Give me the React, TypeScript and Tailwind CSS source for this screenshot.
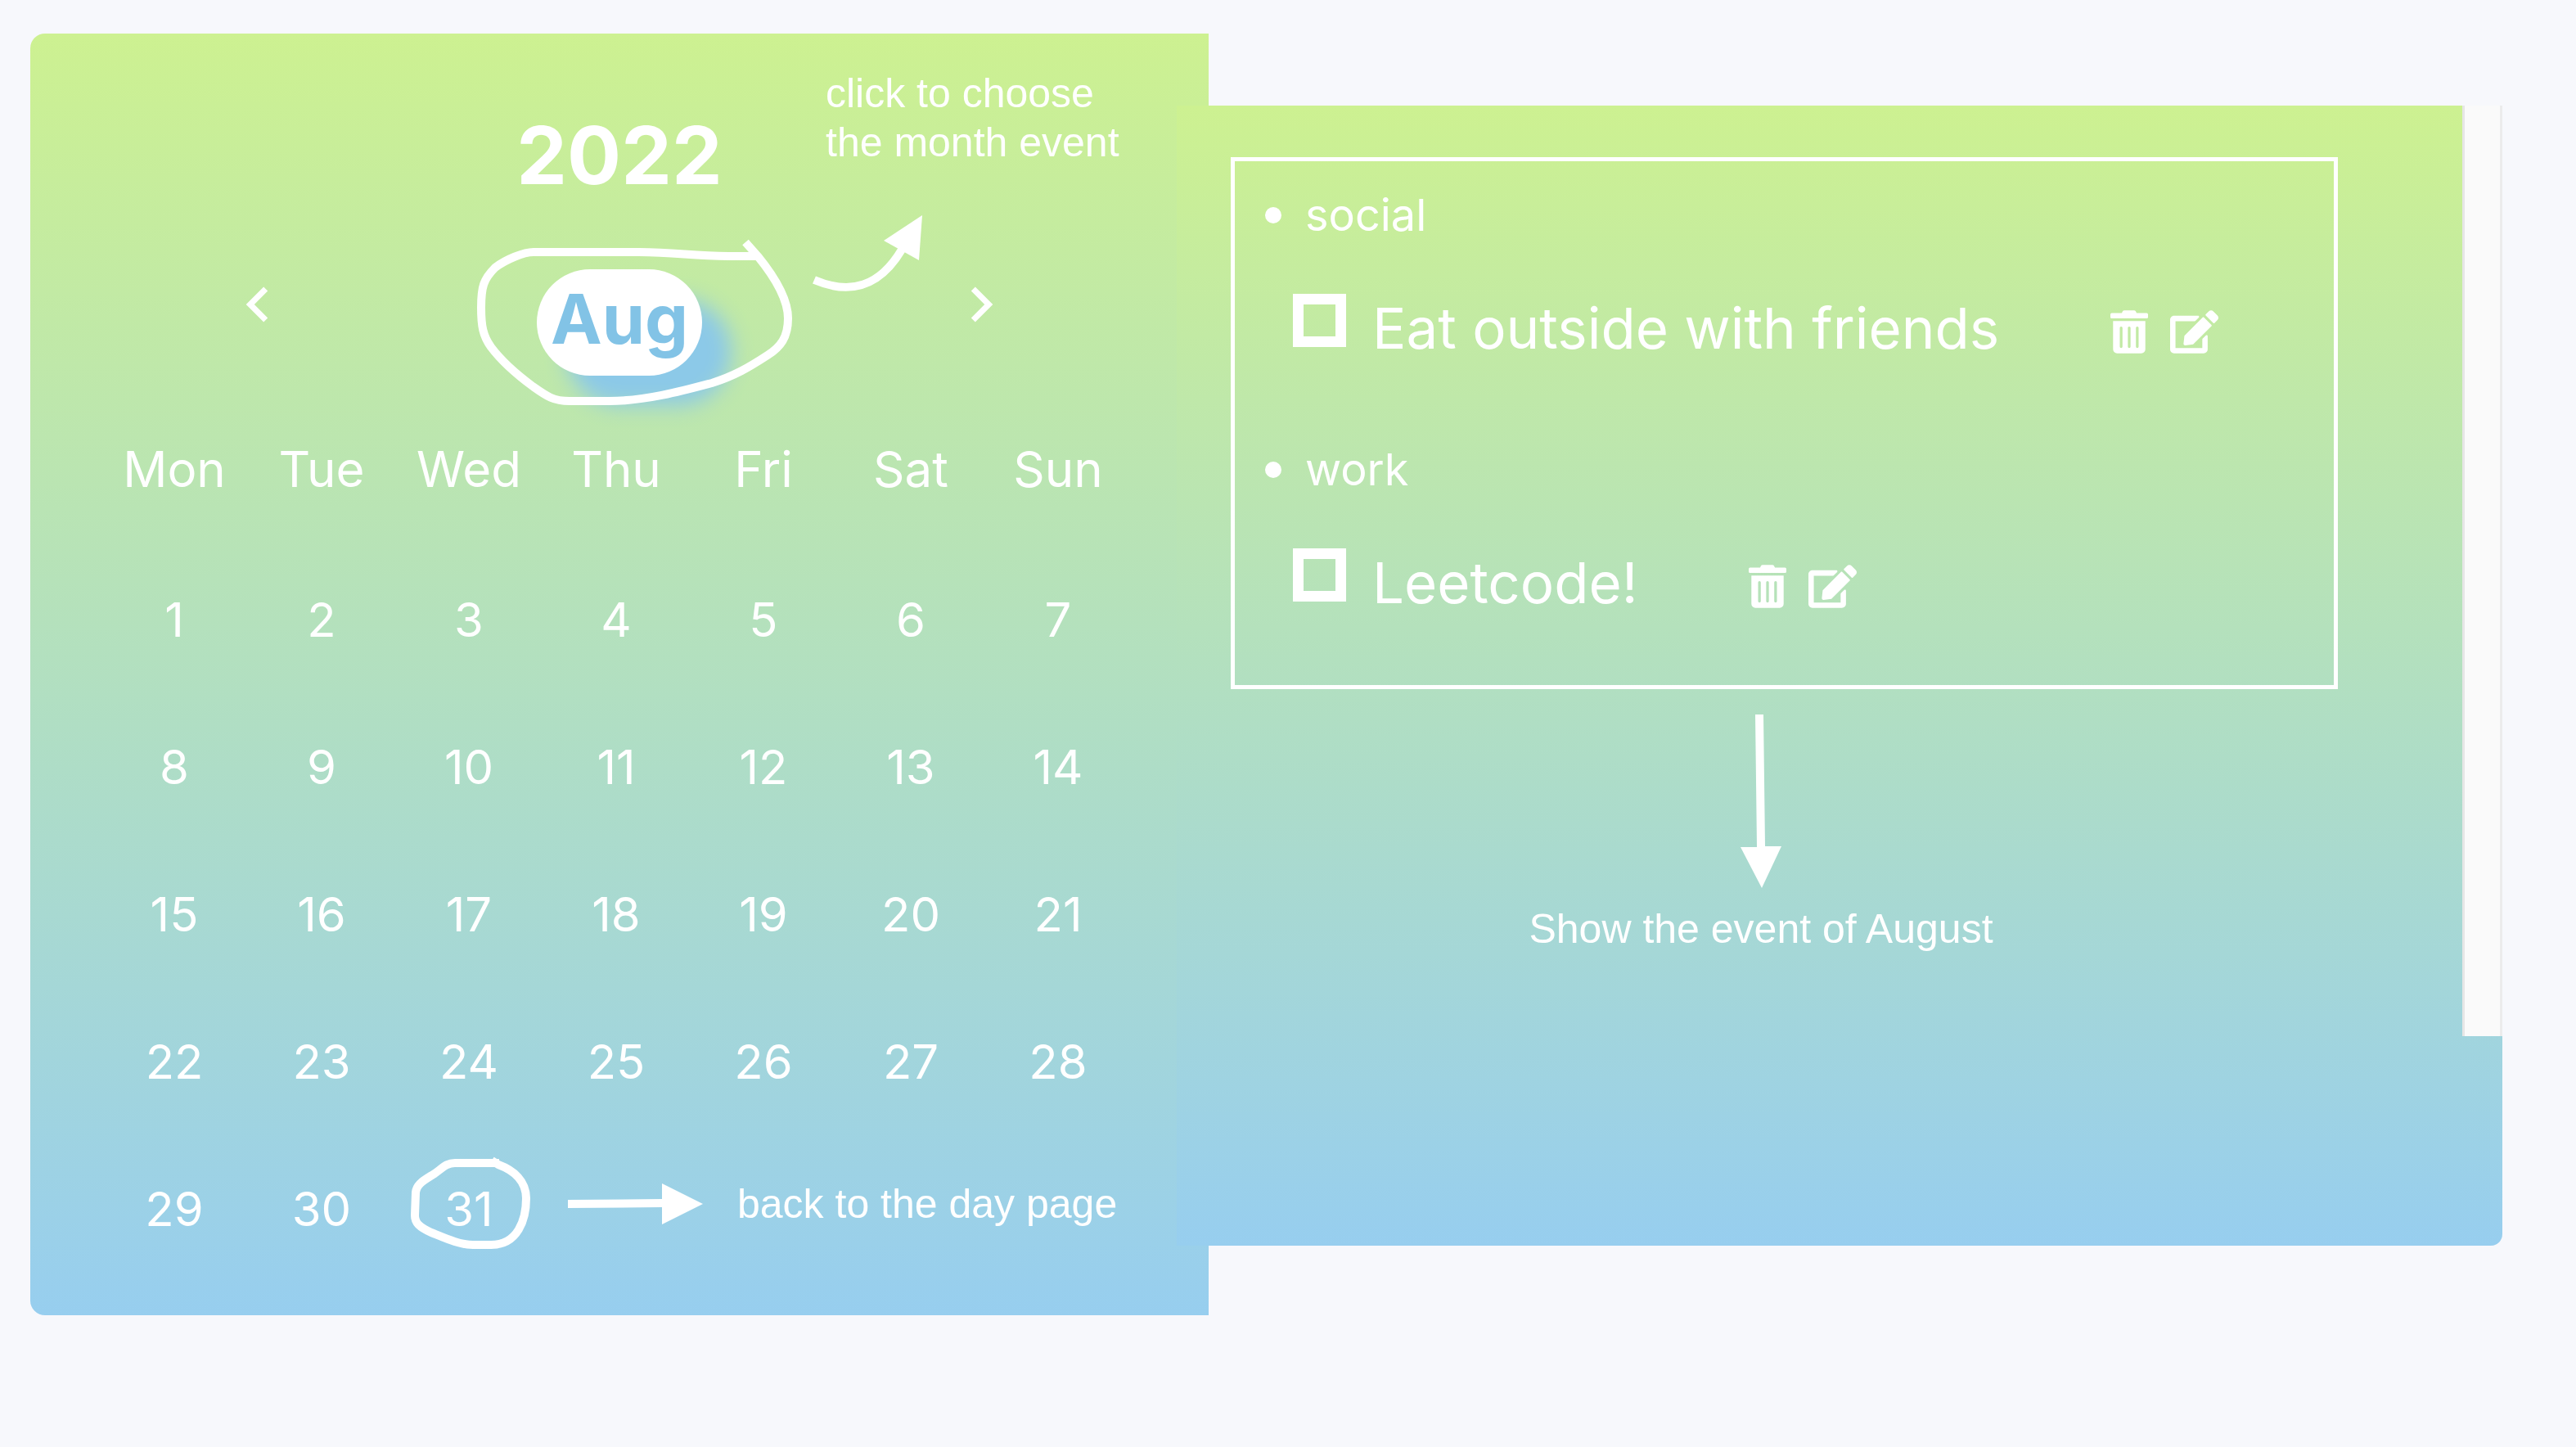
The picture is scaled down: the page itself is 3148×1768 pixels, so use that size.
import React from "react";
import { FaEdit, FaTrashAlt } from "react-icons/fa";
import { MdChevronLeft, MdChevronRight } from "react-icons/md";

const WEEKDAYS = ["Mon", "Tue", "Wed", "Thu", "Fri", "Sat", "Sun"];

const WEEKS = [
  [1, 2, 3, 4, 5, 6, 7],
  [8, 9, 10, 11, 12, 13, 14],
  [15, 16, 17, 18, 19, 20, 21],
  [22, 23, 24, 25, 26, 27, 28],
  [29, 30, 31],
];

const GROUPS = [
  { name: "social", items: ["Eat outside with friends"] },
  { name: "work", items: ["Leetcode!"] },
];

const NOTE = "font-['Liberation_Sans',Arial,sans-serif] text-[50px] leading-[60px]";

function MonthCircle() {
  return (
    <svg
      className="pointer-events-none absolute -top-[38px] -left-[73px] h-[205px] w-[386px] max-w-none"
      viewBox="583 291 386 205"
      fill="none"
      stroke="white"
      strokeWidth="10"
      strokeLinejoin="round"
      aria-hidden="true"
    >
      <path d="M911 296 L926 313 C948 340 963 366 963 389 C963 412 954 424 938 434 C915 449 898 459 870 468 C840 476 790 490 745 490 L696 490 C676 490 668 484 651 472 C632 458 612 440 600 424 C590 410 588 398 588 376 C588 350 591 341 605 327 C618 317 640 308 652 308 L781 308 C827 308 845 313 890 313 L926 313" />
    </svg>
  );
}

function DayCircle() {
  return (
    <svg
      className="pointer-events-none absolute top-0 left-0.5 h-[117px] w-[150px]"
      viewBox="500 1411 150 117"
      fill="none"
      stroke="white"
      strokeWidth="10"
      aria-hidden="true"
    >
      <path d="M601 1418 L609 1423 C628 1430 643 1443 643 1464 C643 1490 633 1521 600 1521 L578 1521 C560 1521 540 1511 527 1506 C512 1499 507 1494 507 1485 L508 1457 C509 1446 520 1441 531 1434 C542 1426 546 1421 556 1421 L610 1421" />
    </svg>
  );
}

function CurvedArrow() {
  return (
    <svg
      className="pointer-events-none absolute top-[176px] -left-[19px] h-[98px] w-[140px]"
      viewBox="990 260 140 98"
      aria-hidden="true"
    >
      <path d="M995 342 C1040 361 1075 350 1102 305" fill="none" stroke="white" strokeWidth="10" />
      <path d="M1127 263 L1080 294 L1123 318 Z" fill="white" />
    </svg>
  );
}

function DayCell({ day }: { day: number }) {
  return (
    <td className="h-[180px] p-0 text-center">
      <button type="button" className="relative h-[132px] w-[150px] cursor-pointer">
        {day}
        {day === 31 && <DayCircle />}
      </button>
    </td>
  );
}

function Calendar() {
  return (
    <section className="flex-[8] rounded-l-[18px] bg-linear-to-b/srgb from-[#cdf191] to-[#97ceef] pt-[43px] pb-10">
      <header className="grid grid-cols-3 pb-[79px]">
        <h1 className="col-start-2 pt-[46px] text-center text-[98px] leading-[120px] font-bold">2022</h1>
        <div className="relative ml-[12px]">
          <p className={NOTE}>
            click to choose
            <br />
            the month event
          </p>
          <CurvedArrow />
        </div>
      </header>

      <nav className="flex items-start justify-between px-[235px]">
        <button type="button" aria-label="Previous month" className="cursor-pointer">
          <MdChevronLeft className="size-[86px]" />
        </button>
        <div className="relative">
          <button
            type="button"
            className="block h-[130px] w-[202px] cursor-pointer rounded-full bg-white pb-2 text-center text-[84px] leading-[122px] font-bold text-[#82c3e6] shadow-[36px_36px_26px_#8cc9e8]"
          >
            Aug
          </button>
          <MonthCircle />
        </div>
        <button type="button" aria-label="Next month" className="cursor-pointer">
          <MdChevronRight className="size-[86px]" />
        </button>
      </nav>

      <div className="mt-6 pr-[94px] pl-[86px]">
        <table className="w-full table-fixed text-[58px]">
          <thead>
            <tr>
              {WEEKDAYS.map((d) => (
                <th key={d} scope="col" className="h-[184px] p-0 pb-1 text-center text-[60px] font-normal">
                  {d}
                </th>
              ))}
            </tr>
          </thead>
          <tbody>
            {WEEKS.map((week) => (
              <tr key={week[0]}>
                {week.map((day) => (
                  <DayCell key={day} day={day} />
                ))}
                {week.length < 7 && (
                  <td colSpan={7 - week.length} className="p-0 pb-3">
                    <div className="flex items-center gap-[42px] pl-[31px]">
                      <svg className="h-[50px] w-[165px] shrink-0" viewBox="0 0 165 50" fill="white" aria-hidden="true">
                        <path d="M0 20 L115 19 V0 L165 25 L115 50 V29 L0 30 Z" />
                      </svg>
                      <p className={`${NOTE} whitespace-nowrap`}>back to the day page</p>
                    </div>
                  </td>
                )}
              </tr>
            ))}
          </tbody>
        </table>
      </div>
    </section>
  );
}

function EventItem({ title }: { title: string }) {
  const id = title.toLowerCase().replace(/[^a-z]+/g, "-");
  return (
    <div className="flex items-start pl-[71px]">
      <input
        id={id}
        type="checkbox"
        className="size-[65px] shrink-0 cursor-pointer appearance-none border-[13px] border-white checked:bg-white"
      />
      <label htmlFor={id} className="ml-8 text-[69px] leading-[84px] whitespace-nowrap">
        {title}
      </label>
      <div className="ml-[136px] flex gap-[27px] self-center pt-2">
        <button type="button" aria-label={`Delete ${title}`} className="cursor-pointer">
          <FaTrashAlt className="h-[53px] w-[46px]" />
        </button>
        <button type="button" aria-label={`Edit ${title}`} className="cursor-pointer">
          <FaEdit className="h-[53px] w-[59px]" />
        </button>
      </div>
    </div>
  );
}

function Events() {
  return (
    <section className="mt-[88px] -ml-[39px] flex-[9] rounded-br-[14px] bg-linear-to-b/srgb from-[#cdf191] to-[#97ceef] pb-[256px]">
      <div className="flex min-h-[1137px]">
        <div className="flex-1 pt-[63px] pl-[66px]">
          <ul className="mr-[152px] flex flex-col gap-[99px] border-5 border-white pt-[34px] pb-[83px]">
            {GROUPS.map((group) => (
              <li key={group.name} className="flex flex-col gap-16">
                <h2 className="flex items-center gap-[29px] pl-[37px] text-[54px] leading-[64px] font-normal">
                  <span className="size-5 rounded-full bg-white" />
                  {group.name}
                </h2>
                {group.items.map((item) => (
                  <EventItem key={item} title={item} />
                ))}
              </li>
            ))}
          </ul>
          <div className="mt-[31px] mr-[209px] flex flex-col items-center gap-5">
            <svg className="h-[212px] w-[50px]" viewBox="0 0 50 212" fill="white" aria-hidden="true">
              <path d="M18 0 H28 L30 161 L50 161 L26 212 L0 162 L20 162 Z" />
            </svg>
            <p className={NOTE}>Show the event of August</p>
          </div>
        </div>
        <div className="w-[49px] border-r-[3px] border-l-[3px] border-r-[#ececec] border-l-[#e6e6e6] bg-[#fafafa]" />
      </div>
    </section>
  );
}

export default function App() {
  return (
    <main className="flex min-h-screen items-start bg-[#f7f8fc] pt-[41px] pr-[90px] pb-10 pl-[37px] font-[Inter,sans-serif] text-white">
      <Calendar />
      <Events />
    </main>
  );
}
